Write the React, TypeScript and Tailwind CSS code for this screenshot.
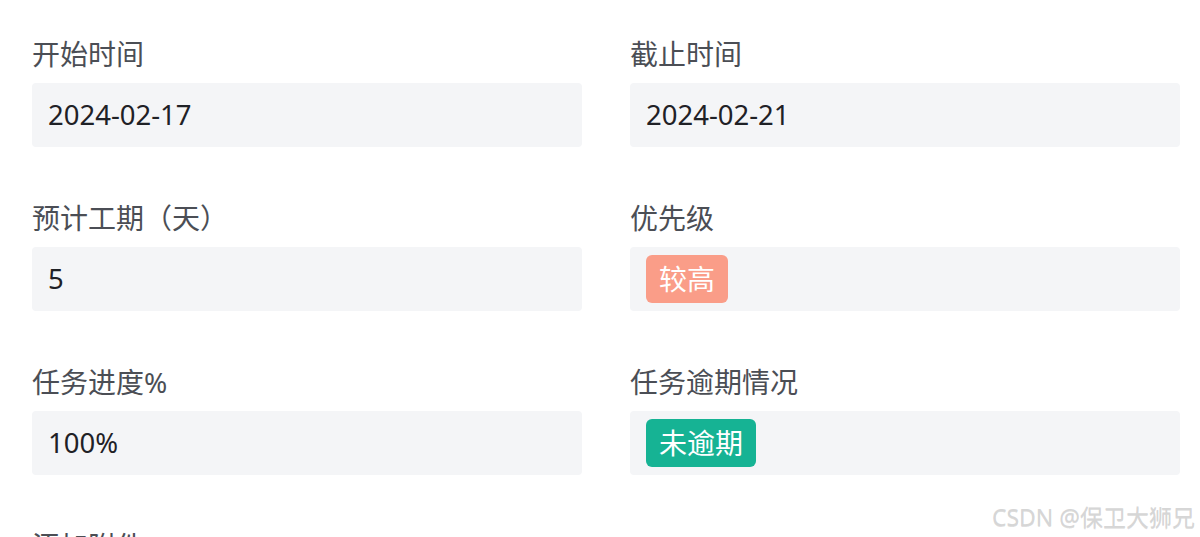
import React from "react";

type Field = {
  label: string;
  value?: string;
  tag?: { text: string; color: string };
};

const rows: Field[][] = [
  [
    { label: "开始时间", value: "2024-02-17" },
    { label: "截止时间", value: "2024-02-21" },
  ],
  [
    { label: "预计工期（天）", value: "5" },
    { label: "优先级", tag: { text: "较高", color: "bg-[#fa9d88]" } },
  ],
  [
    { label: "任务进度%", value: "100%" },
    { label: "任务逾期情况", tag: { text: "未逾期", color: "bg-[#16b394]" } },
  ],
];

const FieldItem: React.FC<{ field: Field }> = ({ field }) => (
  <div className="flex flex-col">
    <div className="h-[36px] leading-[36px] text-[28px] text-[#4b4e55] mb-[11px]">
      {field.label}
    </div>
    <div className="h-[64px] bg-[#f4f5f7] rounded-[4px] px-[16px] flex items-center">
      {field.tag ? (
        <span
          className={`${field.tag.color} text-white text-[28px] h-[48px] leading-[48px] px-[13px] rounded-[6px]`}
        >
          {field.tag.text}
        </span>
      ) : (
        <span className="text-[27.5px] text-[#1f2126]">{field.value}</span>
      )}
    </div>
  </div>
);

export default function App() {
  return (
    <div
      className="relative w-[1200px] h-[537px] overflow-hidden bg-white"
      style={{ fontFamily: '"Noto Sans", "Noto Sans CJK SC", sans-serif' }}
    >
      <div className="pl-[32px] pr-[20px] pt-[36px] flex flex-col gap-[53px]">
        {rows.map((row, i) => (
          <div key={i} className="grid grid-cols-2 gap-x-[48px]">
            {row.map((f) => (
              <FieldItem key={f.label} field={f} />
            ))}
          </div>
        ))}
        <div className="h-[36px] leading-[36px] text-[28px] text-[#4b4e55]">添加附件</div>
      </div>

      {/* watermark */}
      <div className="absolute right-[5px] top-[500px] text-[23px] font-normal text-[#d6d6d6] [text-shadow:0_1px_0_rgba(0,0,0,0.12)] whitespace-nowrap">
        CSDN @保卫大狮兄
      </div>
    </div>
  );
}
